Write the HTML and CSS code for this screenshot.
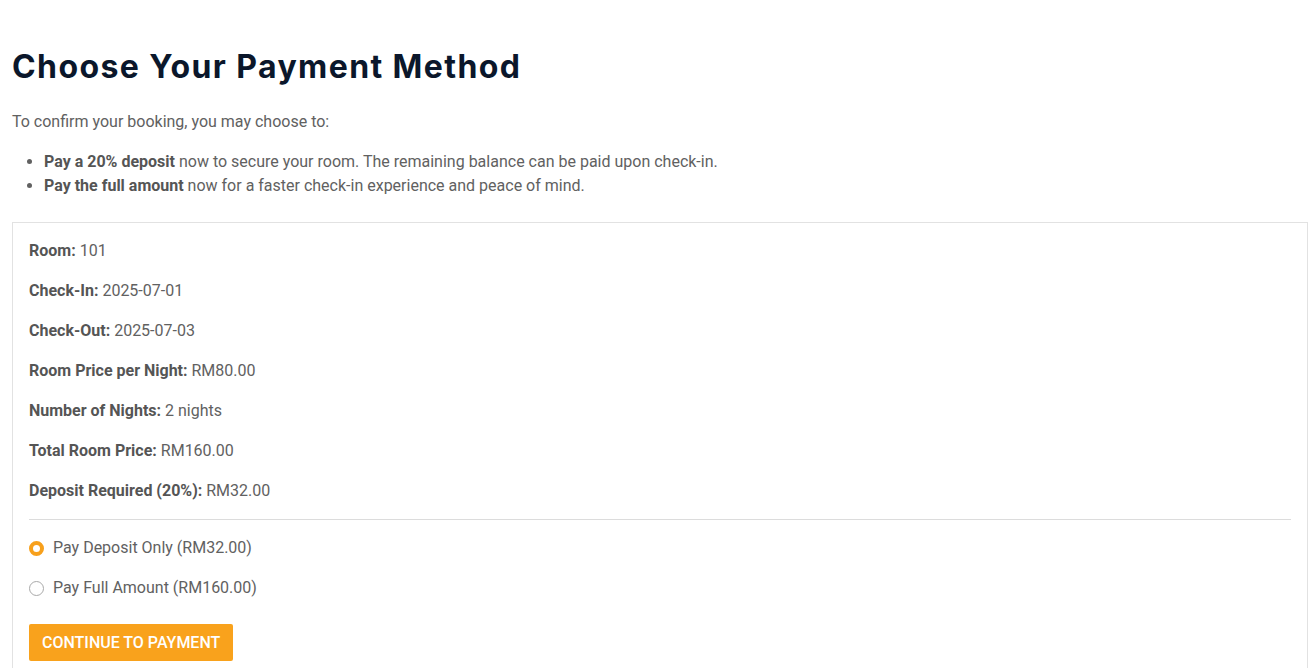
FILE: index.html
```html
<!DOCTYPE html>
<html lang="en">
<head>
<meta charset="utf-8">
<title>Choose Your Payment Method</title>
<link rel="stylesheet" href="styles.css">
</head>
<body>
<main class="page">
  <h1 class="title">Choose Your Payment Method</h1>
  <p class="intro">To confirm your booking, you may choose to:</p>
  <ul class="options-list">
    <li><strong>Pay a 20% deposit</strong> now to secure your room. The remaining balance can be paid upon check-in.</li>
    <li><strong>Pay the full amount</strong> now for a faster check-in experience and peace of mind.</li>
  </ul>
  <form class="summary">
    <p class="row"><strong>Room:</strong> 101</p>
    <p class="row"><strong>Check-In:</strong> 2025-07-01</p>
    <p class="row"><strong>Check-Out:</strong> 2025-07-03</p>
    <p class="row"><strong>Room Price per Night:</strong> RM80.00</p>
    <p class="row"><strong>Number of Nights:</strong> 2 nights</p>
    <p class="row"><strong>Total Room Price:</strong> RM160.00</p>
    <p class="row"><strong>Deposit Required (20%):</strong> RM32.00</p>
    <hr class="divider">
    <label class="choice"><input type="radio" name="pay" class="radio" checked> <span>Pay Deposit Only (RM32.00)</span></label>
    <label class="choice"><input type="radio" name="pay" class="radio"> <span>Pay Full Amount (RM160.00)</span></label>
    <button type="button" class="btn">Continue to Payment</button>
  </form>
</main>
</body>
</html>
```

FILE: styles.css
```css
html, body {
  margin: 0;
  padding: 0;
  background: #ffffff;
}

body {
  font-family: Roboto, "Liberation Sans", sans-serif;
  font-size: 16px;
  line-height: 24px;
  color: #616161;
}

.page {
  padding: 47px 8px 0 12px;
}

.title {
  margin: 0 0 23px;
  font-family: Inter, "DejaVu Sans", sans-serif;
  font-weight: 700;
  font-size: 32px;
  line-height: 40px;
  letter-spacing: 1.4px;
  color: #0b172b;
}

.intro {
  margin: 0 0 16px;
}

.options-list {
  margin: 0 0 24px;
  padding-left: 32px;
}

.options-list strong,
.row strong {
  font-weight: 700;
  color: #555555;
}

.summary {
  border: 1px solid #e2e2e2;
  padding: 16px 16px 16px;
}

.row {
  margin: 0 0 16px;
}

.divider {
  margin: 0;
  border: 0;
  border-top: 1px solid #dcdcdc;
  height: 0;
}

.choice {
  display: flex;
  align-items: center;
  gap: 9px;
  margin-top: 16px;
  line-height: 24px;
}

.radio {
  appearance: none;
  -webkit-appearance: none;
  margin: 0;
  width: 15px;
  height: 15px;
  border-radius: 50%;
  border: 1px solid #a9a9a9;
  background: #fff;
  box-sizing: border-box;
}

.radio:checked {
  border: 4px solid #f7a01c;
}

.btn {
  display: block;
  margin-top: 24px;
  height: 37px;
  padding: 0 13px;
  border: 0;
  border-radius: 2px;
  background: #f9a21c;
  color: #ffffff;
  font-family: Roboto, "Liberation Sans", sans-serif;
  font-size: 16px;
  font-weight: 500;
  text-transform: uppercase;
}
```
